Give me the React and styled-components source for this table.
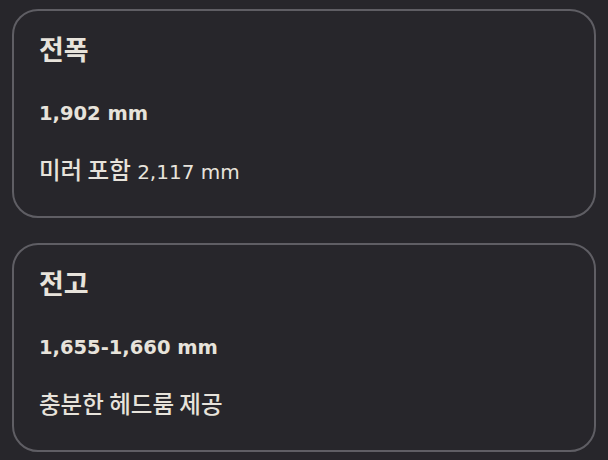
import React from "react";
import styled, { createGlobalStyle } from "styled-components";

const GlobalStyle = createGlobalStyle`
  html, body {
    margin: 0;
    background: #27262b;
  }
  body {
    font-family: "DejaVu Sans", "Noto Sans CJK KR", sans-serif;
    color: #e7e3db;
  }
`;

const specs = [
  { title: "전폭", value: "1,902 mm", note: ["미러 포함", " 2,117 mm"] },
  { title: "전고", value: "1,655-1,660 mm", note: ["충분한 헤드룸 제공", ""] },
];

const App = () => {
  return (
    <SpecsWrapper>
      <GlobalStyle />
      {specs.map((spec) => (
        <Card key={spec.title}>
          <Title>{spec.title}</Title>
          <Value>{spec.value}</Value>
          <Note>
            <Hangul>{spec.note[0]}</Hangul>
            {spec.note[1]}
          </Note>
        </Card>
      ))}
    </SpecsWrapper>
  );
};

const SpecsWrapper = styled.main`
  display: flex;
  flex-direction: column;
  gap: 25px;
  padding: 9px 12px 0;
`;

const Card = styled.section`
  border: 2px solid #5f5e64;
  border-radius: 26px;
  padding: 20px 25px 29px;
  display: flex;
  flex-direction: column;
  gap: 30px;
`;

const Title = styled.h3`
  margin: 0;
  font-family: "Noto Sans CJK KR", sans-serif;
  font-size: 27px;
  line-height: 36px;
  font-weight: 700;
`;

const Value = styled.p`
  margin: 2px 0 -2px;
  font-size: 19.5px;
  line-height: 30px;
  font-weight: 700;
`;

const Note = styled.p`
  margin: 0;
  font-size: 20px;
  line-height: 30px;
  font-weight: 400;
`;

const Hangul = styled.span`
  font-family: "Noto Sans CJK KR", sans-serif;
  font-size: 23.5px;
  line-height: 1;
  font-weight: 500;
`;

export default App;
